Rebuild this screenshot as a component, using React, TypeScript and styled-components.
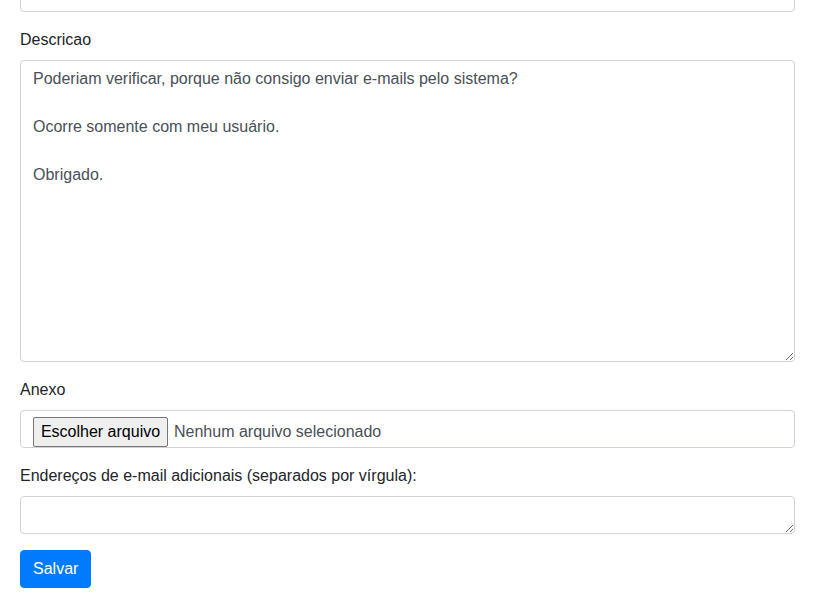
import React from 'react';
import styled, { createGlobalStyle } from 'styled-components';

const GlobalStyle = createGlobalStyle`
  html, body {
    margin: 0;
    padding: 0;
    background: #fff;
    overflow: hidden;
  }
  body {
    font-family: 'Liberation Sans', Arial, sans-serif;
    font-size: 16px;
    line-height: 1.5;
    color: #212529;
  }
  * {
    box-sizing: border-box;
  }
`;

const Page = styled.div`
  position: relative;
  padding: 0 20px;
`;

const TopFade = styled.div`
  position: absolute;
  left: 0;
  right: 0;
  top: 0;
  height: 11px;
  background: linear-gradient(to bottom, rgba(238, 232, 238, 0.85), rgba(244, 240, 244, 0.6));
  pointer-events: none;
`;

const FormGroup = styled.div`
  margin-bottom: 16px;
`;

const Label = styled.label`
  display: inline-block;
  margin-bottom: 8px;
  font-size: 16px;
  line-height: 24px;
  color: #212529;
`;

const Input = styled.input<{ $hiddenTop?: boolean }>`
  display: block;
  width: 100%;
  height: 38px;
  margin-top: ${p => (p.$hiddenTop ? '-26px' : '0')};
  padding: 6px 12px;
  font-family: inherit;
  font-size: 16px;
  line-height: 24px;
  color: #495057;
  background: #fff;
  border: 1px solid #ced4da;
  border-radius: 4px;
`;

const TextArea = styled.textarea<{ $rows: number }>`
  display: block;
  width: 100%;
  height: ${p => p.$rows * 24 + 14}px;
  padding: 6px 12px;
  font-family: inherit;
  font-size: 16px;
  line-height: 24px;
  color: #495057;
  background: #fff;
  border: 1px solid #ced4da;
  border-radius: 4px;
  resize: vertical;
  outline: none;
`;

const FileBox = styled.div`
  display: flex;
  align-items: center;
  gap: 6px;
  height: 38px;
  padding: 0 12px;
  border: 1px solid #ced4da;
  border-radius: 4px;
  color: #495057;
  font-size: 16px;
`;

const FileButton = styled.button`
  width: 135px;
  height: 30px;
  padding: 0;
  margin-top: 5px;
  font-family: inherit;
  font-size: 16px;
  color: #000;
  background: #efefef;
  border: 1px solid #767676;
  border-radius: 2px;
`;

const FileName = styled.span`
  margin-top: 5px;
`;

const SubmitButton = styled.button`
  display: inline-block;
  height: 38px;
  padding: 6px 12px;
  font-family: inherit;
  font-size: 16px;
  line-height: 24px;
  color: #fff;
  background: #007bff;
  border: 1px solid #007bff;
  border-radius: 4px;
`;

const description =
  'Poderiam verificar, porque não consigo enviar e-mails pelo sistema?\n\nOcorre somente com meu usuário.\n\nObrigado.';

export default function App() {
  return (
    <>
      <GlobalStyle />
      <Page>
        <FormGroup>
          <Input $hiddenTop readOnly />
        </FormGroup>
        <FormGroup>
          <Label>Descricao</Label>
          <TextArea $rows={12} defaultValue={description} />
        </FormGroup>
        <FormGroup>
          <Label>Anexo</Label>
          <FileBox>
            <FileButton type="button">Escolher arquivo</FileButton>
            <FileName>Nenhum arquivo selecionado</FileName>
          </FileBox>
        </FormGroup>
        <FormGroup>
          <Label>Endereços de e-mail adicionais (separados por vírgula):</Label>
          <TextArea $rows={1} />
        </FormGroup>
        <SubmitButton type="button">Salvar</SubmitButton>
        <TopFade />
      </Page>
    </>
  );
}
